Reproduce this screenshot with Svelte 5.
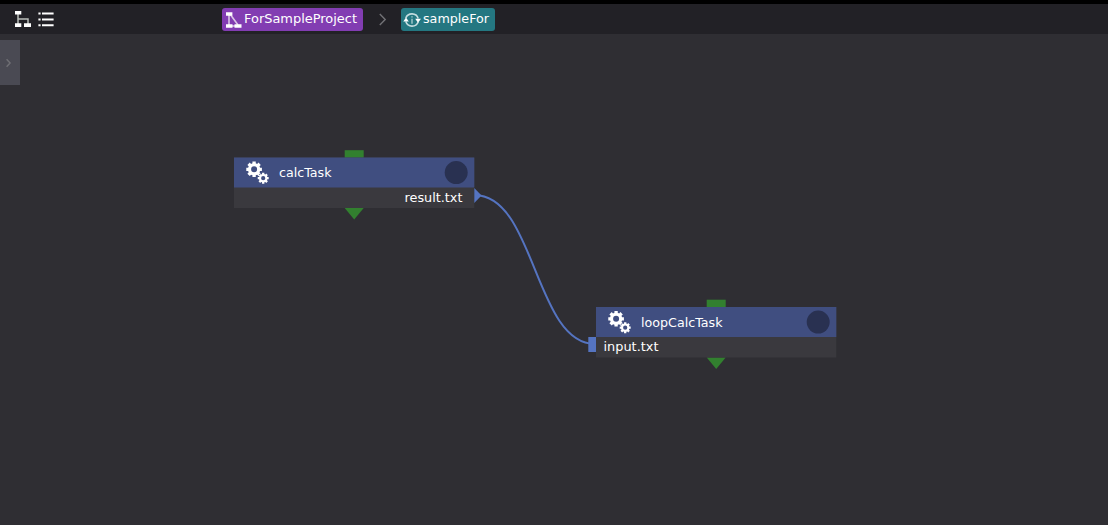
<script>
  const nodes = [
    { x: 234, y: 157, name: 'calcTask', nameWidth: 52.5, file: 'result.txt', fileX: 404.5, fileWidth: 58, output: true },
    { x: 596, y: 306.5, name: 'loopCalcTask', nameWidth: 81.5, file: 'input.txt', fileX: 603.5, fileWidth: 55, output: false }
  ];

  function gear(cx, cy, outer, inner, hole) {
    const points = [];
    for (let i = 0; i < 8; i++) {
      const a = (i * Math.PI) / 4;
      for (const [offset, r] of [[-0.27, inner], [-0.21, outer], [0.21, outer], [0.27, inner]]) {
        points.push(`${(cx + Math.cos(a + offset) * r).toFixed(2)},${(cy + Math.sin(a + offset) * r).toFixed(2)}`);
      }
    }
    return `M${points.join('L')}Z M${cx - hole},${cy}a${hole},${hole} 0 1 0 ${hole * 2},0a${hole},${hole} 0 1 0 ${-hole * 2},0Z`;
  }

  const gears = gear(20.1, 12.3, 8, 6.2, 3) + gear(29.2, 21.2, 5.6, 4.3, 2.1);
</script>

<div class="app">
  <div class="strip"></div>
  <header>
    <div class="views">
      <svg class="tree" width="18" height="18" viewBox="0 0 18 18">
        <path d="M4 3v12M4 9h10v5" fill="none" stroke="#b9bdb9" stroke-width="1.5" />
        <path d="M1 1h6.3v3.6H1zM1 13.2h6.3v3.8H1zM10 13.2h7v3.8h-7z" fill="#fff" />
      </svg>
      <svg class="list" width="17" height="18" viewBox="0 0 17 18">
        <path d="M.4 3.6h2.2M.4 9.5h2.2M.4 15.3h2.2M4 3.6h11.6M4 9.5h11.6M4 15.3h11.6" fill="none" stroke="#fff" stroke-width="2" />
      </svg>
    </div>
    <nav>
      <div class="crumb project">
        <svg class="icon" width="18" height="18" viewBox="0 0 18 18">
          <path d="M4 3v12M5 3l8 11M4 15h10" fill="none" stroke="#d9c5e5" stroke-width="1.6" />
          <path d="M1 1.3h6.4v3.4H1zM1 13.2h6.5v3.6H1zM9.5 13.2h7v3.6h-7z" fill="#fff" />
        </svg>
        <svg class="label" width="115" height="23"><text x="0" y="15" textLength="113" lengthAdjust="spacingAndGlyphs">ForSampleProject</text></svg>
      </div>
      <svg class="separator" width="38" height="23" viewBox="0 0 38 23"><path d="M16.8 6l5.4 5.5-5.4 5.5" fill="none" stroke="#727276" stroke-width="1.4" /></svg>
      <div class="crumb loop">
        <svg class="icon" width="18" height="18" viewBox="0 0 18 18">
          <path d="M2.8 7A6.6 6.6 0 0 1 15.2 7.4M15.2 11A6.6 6.6 0 0 1 2.8 10.6" fill="none" stroke="#c3dcdf" stroke-width="1.6" />
          <path d="M.3 10.4l2.7-4 2.8 4zM12.2 7.8H18l-3 4z" fill="#fff" />
          <path d="M9 5.2v1.4M9 7.7v5" stroke="#9ac4c8" stroke-width="1.5" />
        </svg>
        <svg class="label" width="68" height="23"><text x="0" y="15" textLength="66" lengthAdjust="spacingAndGlyphs">sampleFor</text></svg>
      </div>
    </nav>
  </header>
  <main>
    <button aria-label="Open panel">
      <svg width="8" height="10" viewBox="0 0 8 10"><path d="M1.6 1.2L5.1 5 1.6 8.8" fill="none" stroke="#6f6f74" stroke-width="1.4" /></svg>
    </button>
    <svg class="canvas" viewBox="0 34 1108 491">
      <path d="M475 195.3C535 195.3 535 344 595 344" fill="none" stroke="#5574c1" stroke-width="2" />
      {#each nodes as node}
        <g transform={`translate(${node.x} ${node.y})`}>
          <rect x="110.7" y="-6.8" width="19" height="8" fill="#32802f" />
          <path d="M110.7 51h19l-9.5 11.5z" fill="#32802f" />
          <rect y=".5" width="240.3" height="50.5" fill="#3a393e" />
          <rect y=".5" width="240.3" height="30" fill="#404e80" />
          <path d={gears} fill="#fff" fill-rule="evenodd" />
          <circle cx="222.2" cy="15.6" r="11.5" fill="#293151" />
          {#if node.output}
            <path d="M240.3 31l7.2 7.5-7.2 7.5z" fill="#5574c1" />
          {:else}
            <rect x="-7.7" y="30.5" width="7.7" height="15" fill="#5574c1" />
          {/if}
        </g>
        <text x={node.x + 45} y={node.y + 20} textLength={node.nameWidth} lengthAdjust="spacingAndGlyphs">{node.name}</text>
        <text x={node.fileX} y={node.y + 44.8} textLength={node.fileWidth} lengthAdjust="spacingAndGlyphs">{node.file}</text>
      {/each}
    </svg>
  </main>
</div>

<style>
  :global(body) { margin: 0; background: #2f2e33; }
  .app { width: 1108px; height: 525px; overflow: hidden; display: flex; flex-direction: column; background: #2f2e33; }
  svg { display: block; flex: none; }
  text { fill: #fff; font: 13px "DejaVu Sans", Verdana, sans-serif; }
  .strip { height: 4px; background: #000; }
  header { height: 30px; display: flex; background: #222126; }
  .views { width: 208px; display: flex; gap: 6px; padding: 6px 0 0 14px; }
  nav { display: flex; align-items: flex-start; padding-top: 4px; }
  .crumb { height: 23px; display: flex; align-items: center; border-radius: 3px; box-sizing: border-box; padding-left: 3px; }
  .crumb .label { margin-left: 1px; }
  .project { width: 141px; background: #823db2; }
  .loop { width: 94px; background: #247781; padding-left: 2px; }
  .loop .label { margin-left: 2px; }
  main { height: 491px; position: relative; }
  .canvas { width: 1108px; height: 491px; }
  button { position: absolute; left: 0; top: 6px; width: 20px; height: 45px; padding: 0 0 0 5px; border: 0; background: #4a4a53; display: flex; align-items: center; }
</style>
